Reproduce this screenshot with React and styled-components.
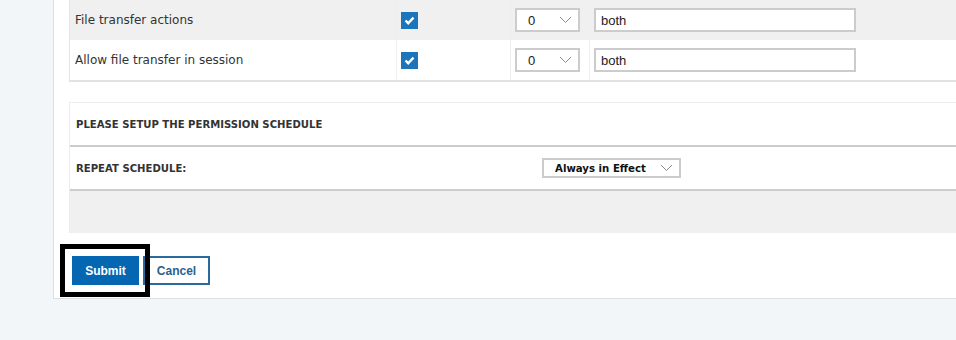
import styled, { createGlobalStyle } from "styled-components";

const GlobalStyle = createGlobalStyle`
  html, body {
    margin: 0;
    padding: 0;
    background: #f3f6f9;
  }
  #root {
    width: 956px;
    height: 340px;
    overflow: hidden;
    background: #f3f6f9;
  }
`;

const Page = styled.div`
  padding-left: 53px;
`;

const Panel = styled.div`
  width: 1000px;
  background: #ffffff;
  border-left: 1px solid #dcdfe2;
  border-bottom: 1px solid #dcdfe2;
  padding: 0 0 13px 15px;
  box-sizing: border-box;
`;

const Table = styled.div`
  border-left: 1px solid #e4e4e4;
  border-bottom: 2px solid #e2e2e2;
`;

const Row = styled.div`
  display: grid;
  grid-template-columns: 326px 114px 79px 1fr;
  height: 40px;
  background: ${(p) => (p.$shaded ? "#f0f0f0" : "#ffffff")};
`;

const Cell = styled.div`
  display: flex;
  align-items: center;
  padding: 0 5px;
  border-left: ${(p) => (p.$first ? "none" : "1px solid #eeeeee")};
  font-family: "DejaVu Sans", Verdana, sans-serif;
  font-size: 12px;
  color: #333333;
`;

const Check = styled.span`
  width: 17px;
  height: 17px;
  background: #1c74ba;
  display: inline-flex;
  align-items: center;
  justify-content: center;
  margin-left: -1px;
`;

const SmallSelect = styled.div`
  width: 65px;
  height: 24px;
  box-sizing: border-box;
  border: 2px solid #cccccc;
  background: #ffffff;
  display: flex;
  align-items: center;
  justify-content: space-between;
  padding: 0 6px 0 11px;
  margin-left: -1px;
  font-family: "Liberation Sans", Arial, sans-serif;
  font-size: 13px;
  color: #222222;
`;

const TextInput = styled.div`
  width: 262px;
  height: 24px;
  box-sizing: border-box;
  border: 2px solid #cccccc;
  background: #ffffff;
  display: flex;
  align-items: center;
  padding-left: 5px;
  margin-left: -1px;
  font-family: "Liberation Sans", Arial, sans-serif;
  font-size: 13px;
  color: #222222;
`;

const Schedule = styled.div`
  margin-top: 20px;
  border-top: 1px solid #ececec;
  border-left: 1px solid #ececec;
`;

const SchedRow = styled.div`
  display: flex;
  align-items: center;
  height: 42px;
  padding-left: 6px;
  border-bottom: 2px solid #cccccc;
  font-family: "DejaVu Sans", Verdana, sans-serif;
  font-weight: bold;
  font-size: 10.1px;
  color: #333333;
`;

const Label = styled.div`
  width: 466px;
  flex: none;
`;

const WideSelect = styled.div`
  width: 139px;
  height: 20px;
  box-sizing: border-box;
  border: 2px solid #cccccc;
  display: flex;
  align-items: center;
  justify-content: space-between;
  padding: 0 6px 0 11px;
  font-family: "DejaVu Sans", Verdana, sans-serif;
  font-weight: bold;
  font-size: 10.2px;
  color: #111111;
`;

const Footer = styled.div`
  height: 42px;
  background: #f0f0f0;
`;

const Actions = styled.div`
  display: flex;
  gap: 4px;
  margin-top: 23px;
  padding-left: 3px;
`;

const Highlight = styled.div`
  position: relative;
  &::after {
    content: "";
    position: absolute;
    left: -12px;
    top: -12px;
    right: -11px;
    bottom: -12px;
    border: 5px solid #000000;
    pointer-events: none;
  }
`;

const Button = styled.button`
  height: 29px;
  width: ${(p) => p.$w}px;
  box-sizing: border-box;
  font-family: "Liberation Sans", Arial, sans-serif;
  font-weight: bold;
  font-size: 12px;
  padding: 0;
  cursor: pointer;
  background: ${(p) => (p.$primary ? "#0567b1" : "#ffffff")};
  color: ${(p) => (p.$primary ? "#ffffff" : "#2c5f8e")};
  border: ${(p) => (p.$primary ? "none" : "2px solid #2a6a9c")};
`;

const Chevron = () => (
  <svg width="13" height="8" viewBox="0 0 13 8">
    <path d="M1 1 L6.5 6.5 L12 1" fill="none" stroke="#8a8a8a" strokeWidth="1" />
  </svg>
);

const CheckMark = () => (
  <svg width="11" height="9" viewBox="0 0 11 9">
    <path d="M1.5 4.5 L4.2 7.2 L9.5 1.6" fill="none" stroke="#ffffff" strokeWidth="2.4" />
  </svg>
);

const rows = [
  { label: "File transfer actions", shaded: true },
  { label: "Allow file transfer in session", shaded: false },
];

export default function App() {
  return (
    <>
      <GlobalStyle />
      <Page>
        <Panel>
          <Table>
            {rows.map((r) => (
              <Row key={r.label} $shaded={r.shaded}>
                <Cell $first>{r.label}</Cell>
                <Cell>
                  <Check>
                    <CheckMark />
                  </Check>
                </Cell>
                <Cell>
                  <SmallSelect>
                    <span>0</span>
                    <Chevron />
                  </SmallSelect>
                </Cell>
                <Cell>
                  <TextInput>both</TextInput>
                </Cell>
              </Row>
            ))}
          </Table>
          <Schedule>
            <SchedRow>PLEASE SETUP THE PERMISSION SCHEDULE</SchedRow>
            <SchedRow>
              <Label>REPEAT SCHEDULE:</Label>
              <WideSelect>
                <span>Always in Effect</span>
                <Chevron />
              </WideSelect>
            </SchedRow>
            <Footer />
          </Schedule>
          <Actions>
            <Highlight>
              <Button $primary $w={67}>Submit</Button>
            </Highlight>
            <Button $w={67}>Cancel</Button>
          </Actions>
        </Panel>
      </Page>
    </>
  );
}
